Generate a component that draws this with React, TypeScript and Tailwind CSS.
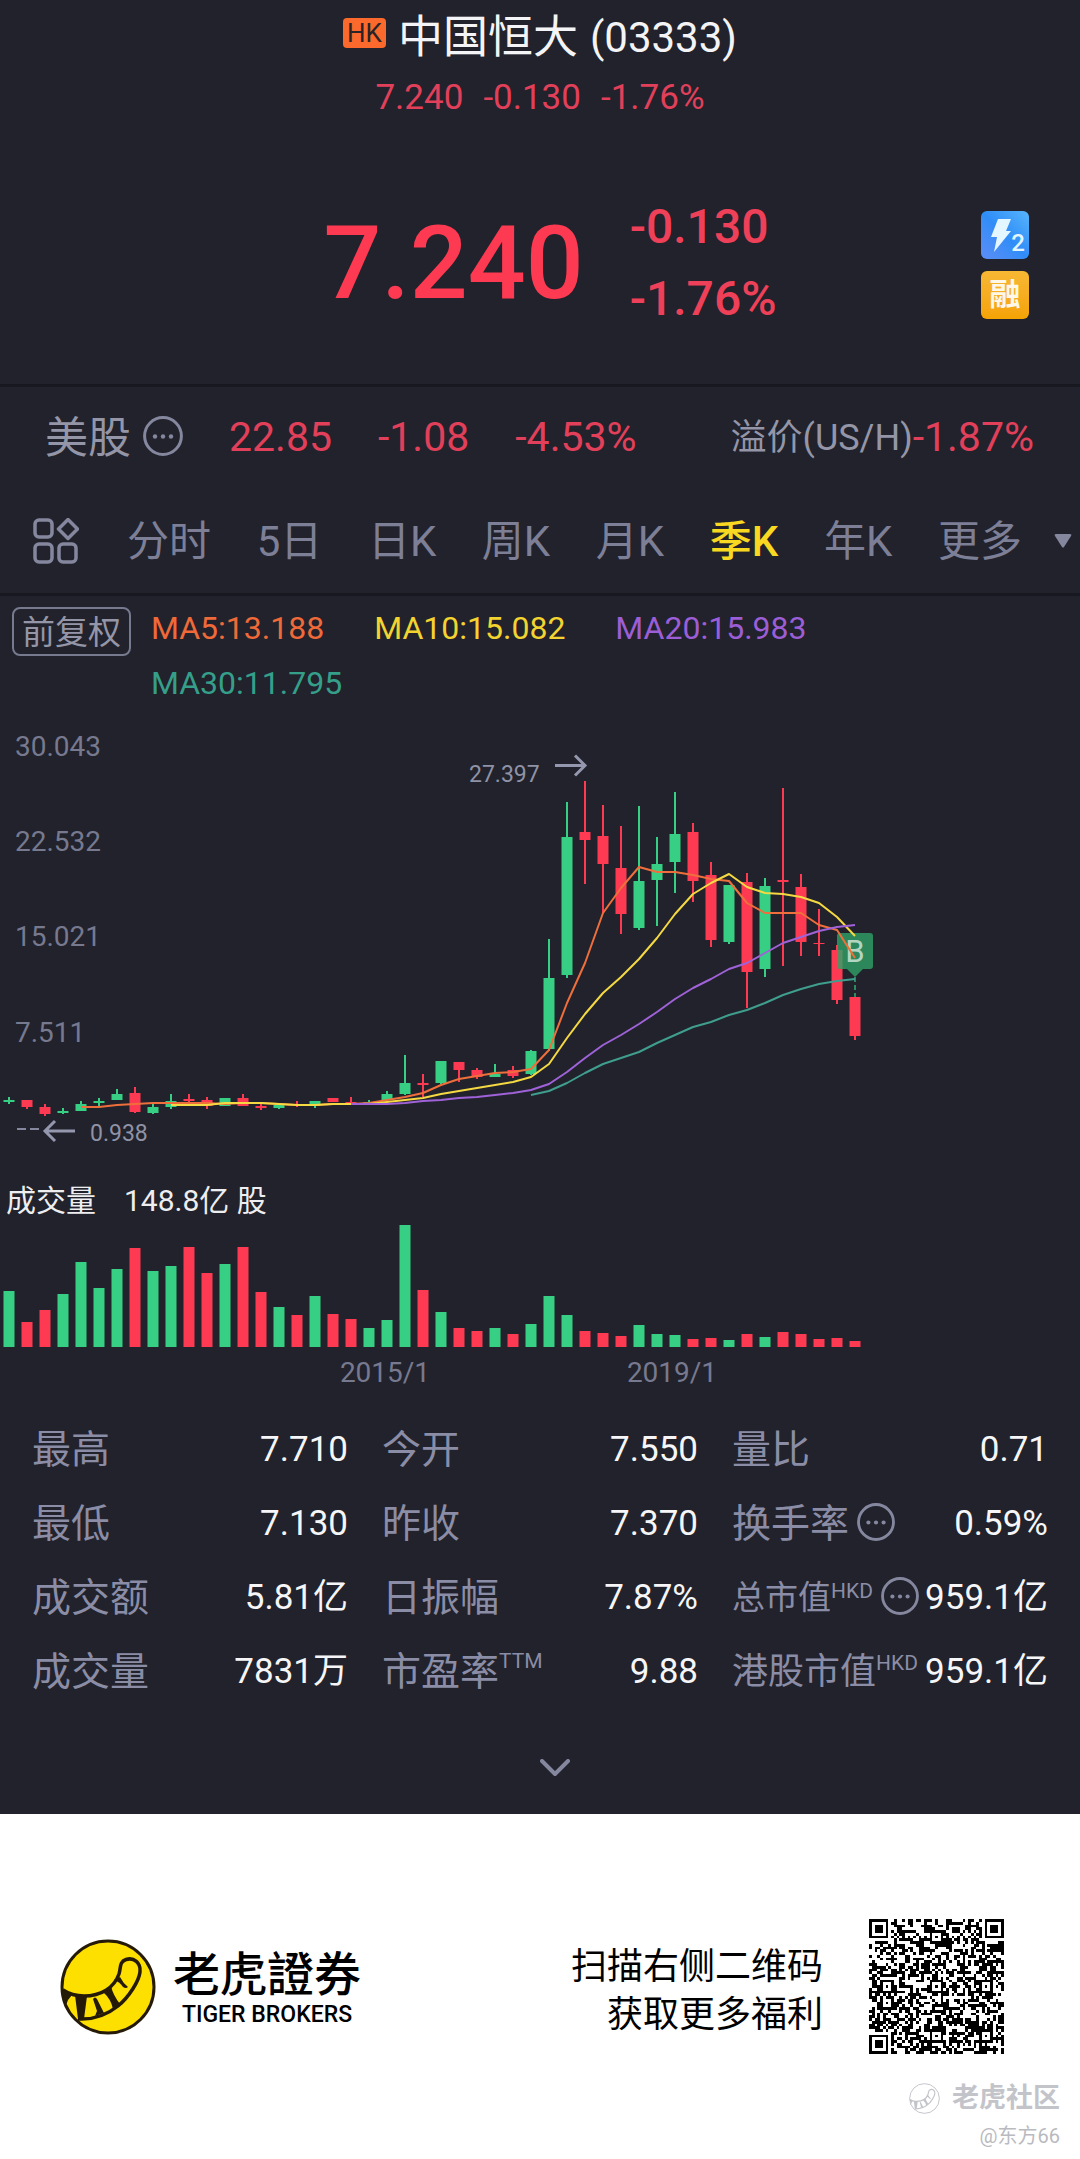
import type { ReactNode } from "react";

// [direction, high, body top, body bottom, low, volume]
type Candle = ["g" | "r", number, number, number, number, number];

const candles: Candle[] = [
  ["g", 377, 380, 382, 384, 56],
  ["r", 380, 380, 387, 389, 25],
  ["r", 384, 387, 394, 396, 37],
  ["g", 388, 391, 393, 394, 53],
  ["g", 381, 384, 391, 391, 85],
  ["g", 378, 381, 383, 386, 59],
  ["g", 369, 374, 380, 380, 78],
  ["r", 367, 373, 392, 393, 99],
  ["g", 383, 387, 393, 394, 76],
  ["g", 374, 381, 387, 389, 81],
  ["r", 374, 379, 381, 383, 100],
  ["r", 377, 380, 386, 389, 74],
  ["g", 378, 378, 386, 386, 83],
  ["r", 374, 378, 386, 386, 100],
  ["r", 384, 386, 388, 390, 55],
  ["g", 385, 385, 388, 389, 40],
  ["r", 381, 384, 385, 387, 32],
  ["g", 381, 381, 386, 388, 51],
  ["r", 378, 378, 382, 382, 33],
  ["r", 377, 382, 384, 384, 28],
  ["g", 380, 382, 384, 384, 19],
  ["g", 371, 374, 380, 380, 27],
  ["g", 335, 363, 374, 375, 122],
  ["r", 354, 363, 365, 377, 57],
  ["g", 341, 341, 363, 364, 35],
  ["r", 342, 342, 350, 362, 19],
  ["r", 348, 350, 357, 359, 16],
  ["g", 344, 354, 357, 357, 19],
  ["r", 346, 350, 356, 358, 13],
  ["g", 330, 331, 354, 355, 23],
  ["g", 219, 258, 329, 331, 51],
  ["g", 82, 117, 255, 258, 32],
  ["r", 61, 112, 120, 164, 16],
  ["r", 85, 116, 144, 193, 14],
  ["r", 106, 148, 194, 214, 11],
  ["g", 86, 161, 208, 210, 22],
  ["g", 117, 144, 160, 206, 13],
  ["g", 72, 114, 142, 173, 12],
  ["r", 103, 112, 161, 182, 8],
  ["r", 142, 155, 220, 227, 9],
  ["g", 165, 165, 222, 224, 7],
  ["r", 153, 162, 252, 288, 13],
  ["g", 158, 166, 249, 257, 10],
  ["r", 68, 160, 162, 246, 15],
  ["r", 154, 167, 222, 236, 13],
  ["r", 189, 223, 224, 236, 8],
  ["r", 225, 230, 280, 284, 9],
  ["r", 277, 277, 316, 320, 6],
];

const averages = [
  {
    label: "MA5:13.188",
    color: "#ef6f3c",
    text: "text-[#ef6a38]",
    from: 4,
    values: [387, 387, 385, 384, 383, 383, 383, 383, 384, 383, 383, 384, 385, 385, 384, 384, 383, 380, 377, 373, 365, 359, 356, 353, 352, 349, 330, 283, 243, 193, 168, 147, 152, 152, 155, 159, 161, 183, 193, 193, 193, 205, 210, 238],
  },
  {
    label: "MA10:15.082",
    color: "#f5d942",
    text: "text-[#f3d330]",
    from: 9,
    values: [385, 385, 385, 383, 383, 383, 384, 385, 385, 384, 384, 384, 382, 380, 378, 374, 371, 368, 365, 362, 357, 344, 318, 294, 273, 257, 239, 218, 194, 174, 163, 154, 167, 173, 174, 177, 183, 197, 216],
  },
  {
    label: "MA20:15.983",
    color: "#9f62d8",
    text: "text-[#9c5ed6]",
    from: 19,
    values: [384, 384, 384, 383, 381, 380, 378, 377, 375, 373, 370, 364, 352, 338, 325, 315, 304, 292, 279, 268, 259, 249, 243, 233, 223, 217, 211, 207, 205],
  },
  {
    label: "MA30:11.795",
    color: "#3f9e8e",
    text: "text-[#359f8a]",
    from: 29,
    values: [375, 371, 363, 353, 344, 338, 332, 323, 315, 307, 302, 295, 290, 283, 275, 269, 264, 261, 259],
  },
];

const axis = [
  { y: 36, label: "30.043" },
  { y: 131, label: "22.532" },
  { y: 226, label: "15.021" },
  { y: 322, label: "7.511" },
];

const periods = ["分时", "5日", "日K", "周K", "月K", "季K", "年K", "更多"];

const fill = { g: "#36cf84", r: "#fd3a52" };
const centerX = (i: number) => 9 + 18 * i;

const MoreIcon = ({ className }: { className: string }) => (
  <svg viewBox="0 0 40 40" className={className} fill="none" aria-hidden="true">
    <circle cx="20" cy="20" r="18.4" stroke="#85879f" strokeWidth="3" />
    <circle cx="12" cy="20.5" r="2.2" fill="#85879f" />
    <circle cx="20" cy="20.5" r="2.2" fill="#85879f" />
    <circle cx="28" cy="20.5" r="2.2" fill="#85879f" />
  </svg>
);

const PriceChart = () => (
  <svg viewBox="0 0 1080 440" className="block w-full" role="img" aria-label="季K">
    {candles.map(([dir, high, top, bottom, low], i) => (
      <g key={i} fill={fill[dir]}>
        <rect x={centerX(i) - 1} y={high} width="2" height={low - high} />
        <rect x={centerX(i) - 5.5} y={top} width="11" height={Math.max(bottom - top, 1)} />
      </g>
    ))}

    {/* Buy marker */}
    <line x1="855" y1="257" x2="855" y2="277" stroke="#2c8a5f" strokeWidth="2" strokeDasharray="5 3" />
    <path d="M840 213h30a3 3 0 0 1 3 3v30a3 3 0 0 1-3 3h-7l-8 8-8-8h-7a3 3 0 0 1-3-3v-30a3 3 0 0 1 3-3z" fill="#2fa268" fillOpacity=".8" />
    <text x="855" y="242" textAnchor="middle" fontSize="31" fill="#b3d6c3">B</text>

    {averages.map((ma) => (
      <polyline
        key={ma.label}
        points={ma.values.map((v, i) => `${centerX(ma.from + i)},${v}`).join(" ")}
        fill="none"
        stroke={ma.color}
        strokeWidth="2"
        strokeLinejoin="round"
      />
    ))}

    {axis.map(({ y, label }) => (
      <text key={label} x="15" y={y} fontSize="28" fill="#77798f">{label}</text>
    ))}

    {/* High and low callouts */}
    <text x="469" y="62" fontSize="23" fill="#9092a6">27.397</text>
    <path d="M555 45.500h29M575 35.500l10 10-10 10" fill="none" stroke="#9597ae" strokeWidth="3" />
    <path d="M17 409h9M30 409h9" stroke="#85879f" strokeWidth="2" />
    <path d="M75 411H46M55 401l-10 10 10 10" fill="none" stroke="#9597ae" strokeWidth="3" />
    <text x="90" y="421" fontSize="23" fill="#9092a6">0.938</text>
  </svg>
);

const VolumeChart = () => (
  <svg viewBox="0 0 1080 170" className="block w-full" role="img" aria-label="成交量">
    {candles.map(([dir, , , , , volume], i) => (
      <rect key={i} x={centerX(i) - 5.5} y={126 - volume} width="11" height={volume} fill={fill[dir]} />
    ))}
    <text x="385" y="161" textAnchor="middle" fontSize="28" fill="#77798f">2015/1</text>
    <text x="672" y="161" textAnchor="middle" fontSize="28" fill="#77798f">2019/1</text>
  </svg>
);

const Stat = ({ label, value }: { label: ReactNode; value: string }) => (
  <div className="flex h-[74px] items-center justify-between whitespace-nowrap">
    <dt className="flex items-center text-[39px] text-[#8b8da6]">{label}</dt>
    <dd className="text-[35px] text-[#f6f6f8]">{value}</dd>
  </div>
);

const Unit = ({ children }: { children: string }) => (
  <span className="self-start pt-2 text-[21px] leading-5">{children}</span>
);

const TigerMark = ({ className, mono }: { className: string; mono?: boolean }) => {
  const ink = mono ? "#c3c4ca" : "#251a08";
  return (
    <svg viewBox="0 0 96 96" className={className} aria-hidden="true">
      <circle cx="48" cy="48" r="46" fill={mono ? "#fff" : "#fddf00"} stroke={ink} strokeWidth="3" />
      <path
        d="M3 51C9 55 16 57 24 57C41 57 54 49 59 35C61 29 59 23 66 20.500C74 18 81 24 80 33C79 42 69 58 58 67C48 75 34 81 18 80"
        fill="none"
        stroke={ink}
        strokeWidth="3.500"
      />
      <path
        d="M2 49L12 56L8 61L5 69ZM15 56L27 57L24 80L18 80ZM33 60Q35 57 37 60L44 74L35 77L37 72ZM43 53L51 47Q53 56 60 65L53 70Q51 60 43 53ZM54 41L60 38Q63 44 68 48Q66 50 63 48Q60 43 54 41Z"
        fill={ink}
      />
    </svg>
  );
};

// 49x49 modules: finders in three corners, alignment marks at 6/24/42
const QR_SIZE = 49;

const ring = (x: number, y: number, cx: number, cy: number) => Math.max(Math.abs(x - cx), Math.abs(y - cy));

const isDark = (x: number, y: number) => {
  for (const [cx, cy] of [[3, 3], [45, 3], [3, 45]]) {
    const d = ring(x, y, cx, cy);
    if (d <= 4) return d !== 2 && d !== 4;
  }
  for (const [cx, cy] of [[24, 6], [6, 24], [24, 24], [42, 24], [24, 42], [42, 42]]) {
    const d = ring(x, y, cx, cy);
    if (d <= 2) return d !== 1;
  }
  if (x === 6 || y === 6) return (x + y) % 2 === 0;
  let h = Math.imul(x + 11, 374761393) + Math.imul(y + 7, 668265263);
  h = Math.imul(h ^ (h >>> 13), 1274126177);
  return ((h ^ (h >>> 16)) & 255) < 132;
};

const qrPath = Array.from({ length: QR_SIZE * QR_SIZE }, (_, n) => [n % QR_SIZE, Math.floor(n / QR_SIZE)])
  .filter(([x, y]) => isDark(x, y))
  .map(([x, y]) => `M${x} ${y}h1v1h-1z`)
  .join("");

const App = () => {
  return (
    <div className="bg-white font-['Roboto','Noto_Sans_CJK_SC',sans-serif]">
      <main className="bg-[#21222b]">
        {/* Title */}
        <header className="pt-[10px] text-center">
          <h1 className="flex items-start justify-center text-[45px] leading-[56px] text-[#f4f4f6]">
            <span className="mt-2 mr-3 rounded-sm bg-[#fb6a2c] px-1 text-[26px] leading-[30px] text-[#2a2328]">HK</span>
            中国恒大
            <span className="ml-3 text-[42px]">(03333)</span>
          </h1>
          <p className="mt-3 flex justify-center gap-5 text-[35px] leading-10 text-[#e2405a]">
            <span>7.240</span>
            <span>-0.130</span>
            <span>-1.76%</span>
          </p>
        </header>

        {/* Last price */}
        <section className="grid grid-cols-[1fr_auto_1fr] items-center border-b-3 border-[#181920] pt-[73px] pr-[51px] pb-[49px] pl-[71px]">
          <div className="col-start-2 flex items-center gap-[46px]">
            <strong className="text-[102px] leading-[144px] font-medium text-[#fd3a52]">7.240</strong>
            <p className="text-5xl leading-[72px] font-medium text-[#ef4059]">
              -0.130
              <br />
              -1.76%
            </p>
          </div>
          <div className="flex flex-col gap-3 justify-self-end pt-1">
            <span className="relative size-12 rounded-md bg-linear-to-bl from-[#57b4fb] via-[#2f8df8] to-[#5b8df5]">
              <svg viewBox="0 0 48 48" className="size-12" aria-hidden="true">
                <path d="M17 8h13l-5 12h5L13 41l3-15h-6z" fill="#e4f6ff" />
              </svg>
              <span className="absolute right-1 bottom-1 text-2xl leading-6 font-medium text-[#e4f6ff]">2</span>
            </span>
            <span className="size-12 rounded-md bg-linear-to-b from-[#f7b733] to-[#f5a302] text-center text-[31px] leading-[48px] font-bold text-[#fff8e8]">
              融
            </span>
          </div>
        </section>

        {/* US listing */}
        <section className="flex h-[102px] items-center justify-between pr-[46px] pl-[45px] text-[41px] whitespace-nowrap text-[#e2405a]">
          <div className="flex items-center">
            <span className="mr-3 text-[43px] text-[#9496a8]">美股</span>
            <MoreIcon className="mb-1 size-10" />
            <span className="ml-[46px]">22.85</span>
            <span className="ml-[46px]">-1.08</span>
            <span className="ml-[46px]">-4.53%</span>
          </div>
          <div className="flex items-center">
            <span className="text-[36px] text-[#9496a8]">溢价(US/H)</span>
            <span>-1.87%</span>
          </div>
        </section>

        {/* Periods */}
        <nav className="flex h-[107px] items-center border-b-3 border-[#181920] pr-2 pl-[33px]">
          <button aria-label="指标">
            <svg viewBox="0 0 46 46" className="size-[46px]" fill="none" stroke="#85879f" strokeWidth="3.500" strokeLinejoin="round">
              <rect x="2" y="2" width="17" height="17" rx="4" />
              <rect x="2" y="26" width="17" height="18" rx="4" />
              <rect x="26" y="26" width="17" height="18" rx="4" />
              <path d="M35 1.500L44.500 11L35 20.500L25.500 11Z" />
            </svg>
          </button>
          <div className="ml-12 flex grow justify-between pt-px text-[42px] text-[#7d7f97]">
            {periods.map((period) => (
              <button key={period} className={period === "季K" ? "font-medium text-[#f8d820]" : ""}>
                {period}
              </button>
            ))}
          </div>
          <svg viewBox="0 0 18 14" className="ml-8 w-[18px]" fill="#85879f" aria-hidden="true">
            <path d="M2 0h14q2 0 1 2l-7 11q-1 1-2 0L1 2Q0 0 2 0z" />
          </svg>
        </nav>

        {/* Moving averages */}
        <section className="flex items-start pt-[5px] pr-10 pb-[9px] pl-3">
          <button className="mt-[6px] mr-5 shrink-0 rounded-lg border-2 border-[#77798f] px-2 pt-[2px] text-[33px] leading-[43px] text-[#9496a8]">
            前复权
          </button>
          <ul className="flex flex-wrap gap-x-[50px] text-[32px] leading-[55px]">
            {averages.map((ma) => (
              <li key={ma.label} className={ma.text}>{ma.label}</li>
            ))}
          </ul>
        </section>

        <PriceChart />

        {/* Volume */}
        <p className="mt-[21px] flex gap-7 pl-[6px] text-[30px] leading-10 text-[#eeeef1]">
          <span>成交量</span>
          <span>148.8亿 股</span>
        </p>
        <VolumeChart />

        {/* Key figures */}
        <dl className="mt-[22px] grid grid-cols-3 gap-x-[34px] px-8">
          <Stat label="最高" value="7.710" />
          <Stat label="今开" value="7.550" />
          <Stat label="量比" value="0.71" />
          <Stat label="最低" value="7.130" />
          <Stat label="昨收" value="7.370" />
          <Stat label={<>换手率<MoreIcon className="mb-1 ml-2 size-[38px]" /></>} value="0.59%" />
          <Stat label="成交额" value="5.81亿" />
          <Stat label="日振幅" value="7.87%" />
          <Stat
            label={<><span className="text-[33px]">总市值</span><Unit>HKD</Unit><MoreIcon className="mb-1 ml-2 size-[38px]" /></>}
            value="959.1亿"
          />
          <Stat label="成交量" value="7831万" />
          <Stat label={<>市盈率<Unit>TTM</Unit></>} value="9.88" />
          <Stat label={<><span className="text-[36px]">港股市值</span><Unit>HKD</Unit></>} value="959.1亿" />
        </dl>

        <button className="flex h-[105px] w-full items-center justify-center pl-[30px]" aria-label="展开">
          <svg viewBox="0 0 30 18" className="mt-3 w-[30px]" fill="none" stroke="#85879f" strokeWidth="4" aria-hidden="true">
            <path d="M2 2l13 13L28 2" strokeLinecap="round" strokeLinejoin="round" />
          </svg>
        </button>
      </main>

      {/* Share footer */}
      <footer className="px-5 pt-[105px] pb-[9px]">
        <div className="flex items-center pr-14 pl-10 text-black">
          <TigerMark className="size-[96px]" />
          <div className="ml-[17px] text-center">
            <p className="font-['Noto_Sans_CJK_TC',sans-serif] text-[47px] leading-[56px] font-medium">老虎證券</p>
            <p className="text-[23px] leading-8 font-medium">TIGER BROKERS</p>
          </div>
          <p className="ml-auto pt-2 text-right text-[36px] leading-12">
            扫描右侧二维码
            <br />
            获取更多福利
          </p>
          <svg viewBox="0 0 49 49" className="ml-[46px] size-[135px]" role="img" aria-label="二维码" shapeRendering="crispEdges">
            <path d={qrPath} />
          </svg>
        </div>
        <div className="mt-[26px] flex items-center justify-end gap-3 text-[27px] leading-9 font-bold text-[#c3c4ca]">
          <TigerMark className="size-[31px]" mono />
          老虎社区
        </div>
        <p className="mt-[7px] text-right text-[20px] leading-[26px] text-[#b9babf]">@东方66</p>
      </footer>
    </div>
  );
};

export default App;
